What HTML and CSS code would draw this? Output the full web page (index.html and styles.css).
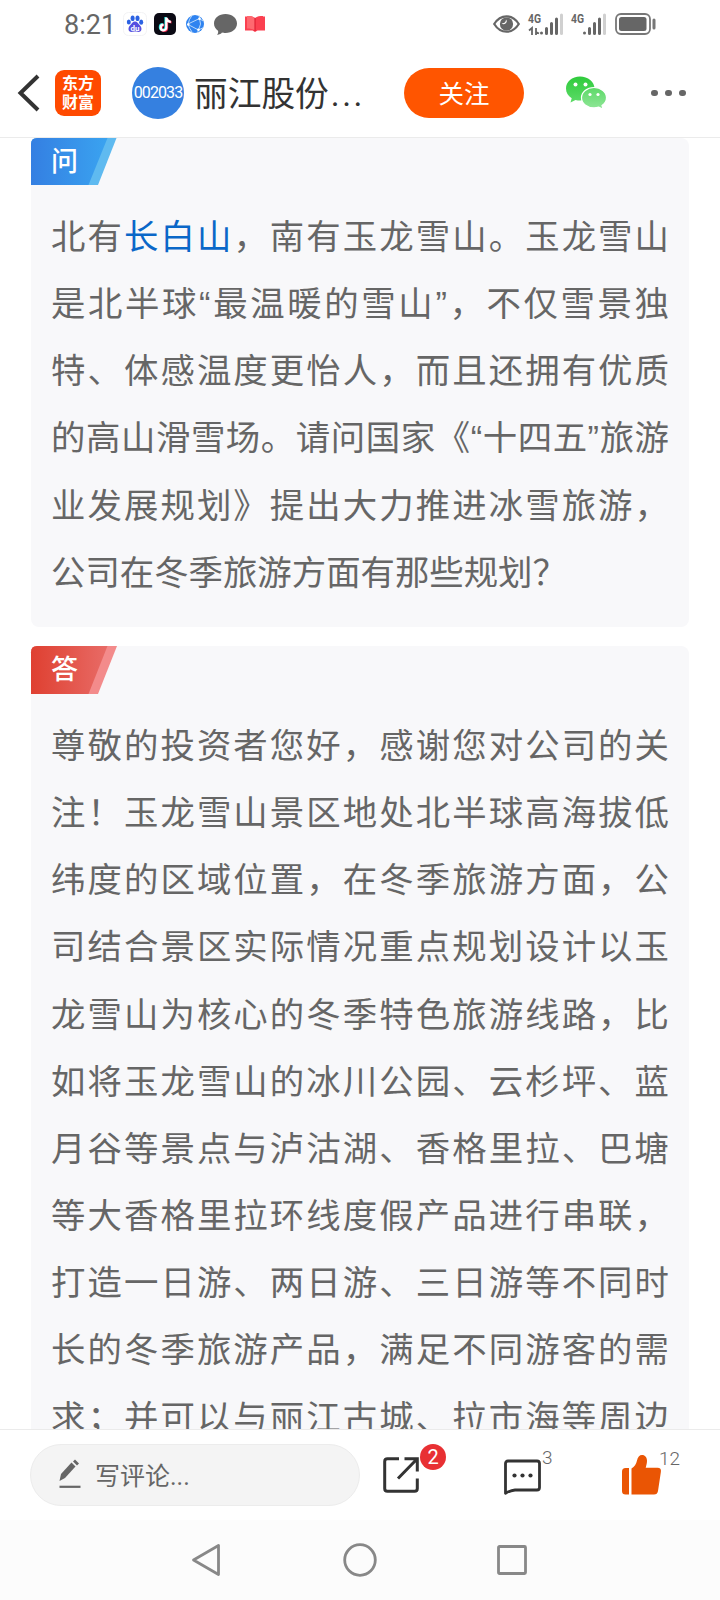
FILE: index.html
```html
<!DOCTYPE html>
<html lang="zh-CN">
<head>
    <meta charset="UTF-8">
    <meta name="viewport" content="width=device-width, initial-scale=1.0">
    <title>丽江股份</title>
    <link rel="stylesheet" href="styles.css">
</head>
<body>
    <header class="header">
        <!-- 状态栏 -->
        <div class="status-bar">
            <span class="time">8:21</span>
            <svg class="st-baidu" width="24" height="24" viewBox="0 0 24 24">
                <rect x=".5" y=".5" width="23" height="23" rx="5" fill="#fff" stroke="#f3f3f5"/>
                <g fill="#2b62e3">
                    <ellipse cx="5.8" cy="10" rx="2" ry="2.6"/>
                    <ellipse cx="9.6" cy="6.2" rx="2" ry="2.8"/>
                    <ellipse cx="14.5" cy="6.2" rx="2" ry="2.8"/>
                    <ellipse cx="18.2" cy="10.2" rx="2" ry="2.6"/>
                </g>
                <path d="M12 9.6c2.3 0 3.2 2.2 4.8 3.7 2.6 2.4 2.3 6.7-1.3 6.7-1.5 0-2-.4-3.5-.4s-2 .4-3.5.4C4.9 20 4.6 15.7 7.2 13.3 8.8 11.8 9.7 9.6 12 9.6z" fill="#5650e0"/>
                <text x="12" y="18.5" class="du">du</text>
            </svg>
            <svg class="st-tiktok" width="22" height="22" viewBox="0 0 22 22">
                <rect width="22" height="22" rx="5" fill="#0b0a14"/>
                <g fill="none" stroke-width="2.3">
                    <path d="M11.500 4v10a2.800 2.800 0 1 1-2.800-2.800M11.500 4.500c.4 2.200 2 3.600 4.500 3.800" stroke="#25e5e0"/>
                    <path d="M13 5v10a2.800 2.800 0 1 1-2.800-2.800M13 5.500c.4 2.200 2 3.600 4.500 3.800" stroke="#f42c55"/>
                    <path d="M12.300 4.500v10a2.800 2.800 0 1 1-2.800-2.800M12.300 5c.4 2.200 2 3.600 4.500 3.800" stroke="#fff"/>
                </g>
            </svg>
            <svg class="st-globe" width="18" height="18" viewBox="0 0 18 18">
                <circle cx="9" cy="9" r="9" fill="#2f83f0"/>
                <path d="M1 9.500L13.500 3.500M2 9.500l10.500 5.500M13.500 3.500Q16 9 12.500 15M13 0l.5 3.500L17 6M12.500 15l-1 3M12.500 15l5-2.500M6 .5Q3 4 2 9.500q1.500 4 4 7.500" fill="none" stroke="#c9e2fb" stroke-width=".9"/>
                <g fill="#fff"><circle cx="2.3" cy="9.5" r="1.2"/><circle cx="13.5" cy="3.7" r="1.3"/><circle cx="12.5" cy="14.8" r="1.3"/></g>
            </svg>
            <svg class="st-chat" width="23" height="21" viewBox="0 0 23 21">
                <path d="M11.500 0C18 0 23 4 23 9.500S18 19 11.500 19c-1.500 0-2.300 0-3.500-.4C7 20 5 21 3 20.800c1-1 1.500-2.500 1-4C1.500 15 0 12.500 0 9.500 0 4 5 0 11.500 0z" fill="#666"/>
            </svg>
            <svg class="st-book" width="20" height="16" viewBox="0 0 20 16">
                <path d="M0 .5h2v-.5c3 0 6 .2 8 2 2-1.800 5-2 8-2v.5h2V14.500h-7.500L10 16l-2.500-1.500H0z" fill="#fb4050"/>
                <path d="M2 0c3 0 6 .2 8 2v12.500C8 13 5 12.500 2 12.500z" fill="#fe6970"/>
                <path d="M10 2v13" stroke="#d9162b" stroke-width="1"/>
            </svg>
            <svg class="st-eye" width="27" height="18" viewBox="0 0 27 18">
                <path d="M1.200 9C4 4.500 8 1.300 13.500 1.300S23 4.500 25.800 9C23 13.500 19 16.700 13.500 16.700S4 13.500 1.200 9z" fill="none" stroke="#666" stroke-width="2.2"/>
                <circle cx="13.5" cy="9" r="6.6" fill="#666"/>
                <path d="M13 4.500a2.800 2.800 0 1 1-4.500 3.500c2.500.8 4.500-1 4.500-3.500z" fill="#fff"/>
            </svg>
            <svg class="st-signal1" width="36" height="23" viewBox="0 0 36 23">
                <text x="0" y="10" class="net" textLength="13" lengthAdjust="spacingAndGlyphs">4G</text>
                <path d="M1 17.500L4 15v7M8 15v7M8 19l3 1.500" fill="none" stroke="#666" stroke-width="1.8"/>
                <g stroke="#666" stroke-width="3" stroke-linecap="round"><path d="M13.500 20v.1M18.500 15.500v5M23.500 10.500v10M28.500 6v14.500"/><path d="M33.500 2v18.500" stroke="#d0d0d0"/></g>
            </svg>
            <svg class="st-signal2" width="36" height="23" viewBox="0 0 36 23">
                <text x="0" y="10" class="net" textLength="13" lengthAdjust="spacingAndGlyphs">4G</text>
                <g stroke="#666" stroke-width="3" stroke-linecap="round"><path d="M13.500 20v.1M18.500 15.500v5M23.500 10.500v10M28.500 6v14.500"/><path d="M33.500 2v18.500" stroke="#d0d0d0"/></g>
            </svg>
            <svg class="st-battery" width="41" height="22" viewBox="0 0 41 22">
                <rect x="1" y="1" width="34" height="20" rx="5" fill="none" stroke="#777" stroke-width="1.8"/>
                <rect x="4" y="4" width="27.5" height="14" rx="2.5" fill="#666"/>
                <rect x="37.5" y="5.5" width="3" height="11" rx="1.5" fill="#777"/>
            </svg>
        </div>
        <!-- 标题栏 -->
        <div class="title-bar">
            <svg class="back" width="24" height="40" viewBox="0 0 24 40">
                <path d="M20 3L2.500 20 20 37" fill="none" stroke="#333" stroke-width="4"/>
            </svg>
            <div class="logo">东方<br>财富</div>
            <div class="avatar">002033</div>
            <div class="name">丽江股份<span class="dots">...</span></div>
            <div class="follow">关注</div>
            <svg class="wechat" width="42" height="34" viewBox="0 0 42 34">
                <defs>
                    <linearGradient id="g1" x1="0" y1="0" x2="0" y2="1"><stop offset="0" stop-color="#2fcb3c"/><stop offset="1" stop-color="#5cdb67"/></linearGradient>
                    <linearGradient id="g2" x1="0" y1="0" x2="0" y2="1"><stop offset="0" stop-color="#5dd968"/><stop offset="1" stop-color="#90e698"/></linearGradient>
                </defs>
                <path d="M15 .5c8 0 14.500 5.300 14.500 12S23 24.500 15 24.500c-1.600 0-3-.2-4.500-.6L5.500 26.500l1.200-4.300C3 20 1 16.500 1 12.500c0-6.700 6-12 14-12z" fill="url(#g1)"/>
                <path d="M29 11.500c7 0 12.500 4.600 12.500 10.300 0 3.300-1.700 6-4.500 7.800l1 3.600-4.200-2.100c-1.500.5-3 .8-4.800.8-7 0-12.500-4.500-12.500-10.100S22 11.500 29 11.500z" fill="url(#g2)" stroke="#fff" stroke-width="1.2"/>
                <g fill="#fff"><circle cx="10.5" cy="8.5" r="2"/><circle cx="20.5" cy="8.5" r="2"/><circle cx="25" cy="18.500" r="1.6"/><circle cx="33" cy="18.5" r="1.6"/></g>
            </svg>
            <div class="more"><i></i><i></i><i></i></div>
        </div>
    </header>

    <main class="content">
        <section class="card ask">
            <svg class="tag" width="86" height="47" viewBox="0 0 86 47" preserveAspectRatio="none">
                <defs><linearGradient id="blue"><stop offset="0" stop-color="#347fe2"/><stop offset="1" stop-color="#3aa3f0"/></linearGradient></defs>
                <path d="M6 0h79.500L67 47H0V6q0-6 6-6z" fill="#5fbaf0"/>
                <path d="M6 0h70.500L57.500 47H0V6q0-6 6-6z" fill="url(#blue)"/>
                <text x="33.5" y="32.5" class="tag-text">问</text>
            </svg>
            <p>北有<a class="link">长白山</a>，南有玉龙雪山。玉龙雪山是北半球“最温暖的雪山”，不仅雪景独特、体感温度更怡人，而且还拥有优质的高山滑雪场。请问国家《“十四五”旅游业发展规划》提出大力推进冰雪旅游，公司在冬季旅游方面有那些规划？</p>
        </section>
        <section class="card answer">
            <svg class="tag" width="86" height="48" viewBox="0 0 86 47" preserveAspectRatio="none">
                <defs><linearGradient id="red"><stop offset="0" stop-color="#df4031"/><stop offset="1" stop-color="#e86b66"/></linearGradient></defs>
                <path d="M6 0h80L67 47H0V6q0-6 6-6z" fill="#f38b8b"/>
                <path d="M6 0h70.500L57.500 47H0V6q0-6 6-6z" fill="url(#red)"/>
                <text x="33.5" y="32.5" class="tag-text">答</text>
            </svg>
            <p>尊敬的投资者您好，感谢您对公司的关注！玉龙雪山景区地处北半球高海拔低纬度的区域位置，在冬季旅游方面，公司结合景区实际情况重点规划设计以玉龙雪山为核心的冬季特色旅游线路，比如将玉龙雪山的冰川公园、云杉坪、蓝月谷等景点与泸沽湖、香格里拉、巴塘等大香格里拉环线度假产品进行串联，打造一日游、两日游、三日游等不同时长的冬季旅游产品，满足不同游客的需求；并可以与丽江古城、拉市海等周边</p>
        </section>
    </main>

    <!-- 底部评论栏 -->
    <footer class="comment-bar">
        <div class="input">
            <svg width="22" height="30" viewBox="0 0 22 30">
                <path d="M.5 22l1.500-7L12.500 3.500l4 4L6 19z" fill="#666"/>
                <path d="M14 2.500l2-2 4 4-2 2z" fill="#666"/>
                <path d="M.5 27.800h21" stroke="#666" stroke-width="2.2"/>
            </svg>
            <span>写评论...</span>
        </div>
        <div class="action share">
            <svg width="36" height="36" viewBox="0 0 36 36" fill="none" stroke="#333" stroke-width="3">
                <path d="M16 1.700H4.500Q1.700 1.700 1.700 4.500v27q0 2.800 2.800 2.800h27q2.800 0 2.800-2.800V21.500M21.500 1.700h12.800V14.500M34 2L15 21.500"/>
            </svg>
            <span class="badge">2</span>
        </div>
        <div class="action reply">
            <svg width="37" height="36" viewBox="0 0 37 36">
                <path d="M4 2h29q2.500 0 2.500 2.500v24q0 2.500-2.500 2.500H11q-5 .5-9.500 3.300V4.500Q1.500 2 4 2z" fill="none" stroke="#333" stroke-width="2.8" stroke-linejoin="round"/>
                <g fill="#333"><circle cx="10.5" cy="16.5" r="2.1"/><circle cx="18.5" cy="16.5" r="2.1"/><circle cx="26.5" cy="16.5" r="2.1"/></g>
            </svg>
            <span class="count">3</span>
        </div>
        <div class="action like">
            <svg width="39" height="40" viewBox="0 0 39 40" fill="#ea5504">
                <path d="M3.500 13H7v26.500H3.500Q0 39.500 0 36V16.500Q0 13 3.500 13z"/>
                <path d="M9.500 13.500c3-1.500 4.700-4.500 5.500-8C15.700 2 17.500 0 20 0c3.200 0 5 2.500 5 5.700 0 2.600-.8 5-1.300 7H35.500q4 0 3.400 4L36 36q-.6 3.500-4 3.500H9.500z"/>
            </svg>
            <span class="count">12</span>
        </div>
    </footer>

    <nav class="sys-nav">
        <svg width="30" height="34" viewBox="0 0 30 34"><path d="M27.500 2.500v29L2.500 17z" class="nav-line"/></svg>
        <svg width="34" height="34" viewBox="0 0 34 34"><circle cx="17" cy="17" r="15.3" class="nav-line"/></svg>
        <svg width="30" height="30" viewBox="0 0 30 30"><rect x="1.5" y="1.5" width="27" height="27" rx="1" class="nav-line"/></svg>
    </nav>
</body>
</html>
```
FILE: styles.css
```css
* {
    box-sizing: border-box;
}
body {
    margin: 0;
    width: 720px;
    height: 1600px;
    display: flex;
    flex-direction: column;
    overflow: hidden;
    background: #fff;
    color: #666;
    font-family: Roboto, "Noto Sans CJK SC", sans-serif;
}
svg {
    display: block;
    flex: none;
    overflow: visible;
}

/* header */
.header {
    height: 138px;
    flex: none;
    border-bottom: 1px solid #ebebeb;
}
.status-bar {
    display: flex;
    align-items: center;
    height: 48px;
    padding-left: 64px;
}
.time {
    width: 59px;
    font-size: 27px;
    line-height: 48px;
    padding-top: 2px;
}
.du {
    font-size: 8px;
    font-weight: bold;
    fill: #fff;
    text-anchor: middle;
}
.net {
    font-size: 13.5px;
    font-weight: bold;
    fill: #666;
    font-family: Roboto, sans-serif;
}
.st-tiktok { margin-left: 7px; }
.st-globe { margin-left: 10px; }
.st-chat { margin-left: 10px; }
.st-book { margin-left: 8px; }
.st-eye { margin-left: 228px; }
.st-signal1 { margin-left: 8px; }
.st-signal2 { margin-left: 7px; }
.st-battery { margin-left: 8px; }

.title-bar {
    display: flex;
    align-items: center;
    height: 90px;
    padding-left: 18px;
}
.logo {
    width: 46px;
    height: 46px;
    margin-left: 13px;
    padding-top: 4px;
    border-radius: 9px;
    background: #ff4a00;
    color: #fff;
    font-size: 16px;
    font-weight: 700;
    line-height: 19px;
    text-align: center;
}
.avatar {
    width: 52px;
    height: 52px;
    margin-left: 31px;
    border-radius: 50%;
    background: #3580e0;
    color: #fff;
    font-size: 16px;
    letter-spacing: -.9px;
    line-height: 51px;
    text-align: center;
}
.name {
    width: 210px;
    margin-left: 10px;
    padding-top: 4px;
    color: #333;
    font-size: 33.7px;
    line-height: 50px;
    white-space: nowrap;
}
.dots {
    margin-left: 2px;
    letter-spacing: 2.5px;
}
.follow {
    width: 120px;
    height: 50px;
    border-radius: 25px;
    background: #f50;
    color: #fff;
    font-size: 25.5px;
    line-height: 52px;
    text-align: center;
}
.wechat {
    margin-left: 41px;
}
.more {
    display: flex;
    gap: 7.5px;
    margin-left: 44px;
}
.more i {
    width: 6.5px;
    height: 6.5px;
    border-radius: 50%;
    background: #666;
}

/* cards */
.content {
    height: 1291px;
    flex: none;
    overflow: hidden;
    padding: 0 31px;
}
.card {
    background: #f8f8fa;
    border-radius: 8px;
}
.ask {
    height: 489px;
    margin-bottom: 19px;
}
.tag-text {
    font-size: 27px;
    font-weight: 500;
    fill: #fff;
    text-anchor: middle;
}
.card p {
    margin: 0;
    padding: 19px 20px 0;
    font-family: "Liberation Sans", "Noto Sans CJK SC", sans-serif;
    font-size: 34.4px;
    line-height: 67.15px;
    text-align: justify;
    text-spacing-trim: space-all;
}
.answer p {
    text-align-last: justify;
}
.link {
    color: #0a67c8;
}

/* bottom */
.comment-bar {
    position: relative;
    display: flex;
    align-items: center;
    height: 91px;
    flex: none;
    padding-left: 30px;
    border-top: 1px solid #ebebeb;
    background: #fff;
}
.input {
    display: flex;
    align-items: center;
    gap: 14px;
    width: 330px;
    height: 62px;
    padding: 0 0 2px 28px;
    border: 1px solid #ececec;
    border-radius: 31px;
    background: #f4f4f4;
    font-size: 25px;
}
.action {
    position: relative;
}
.share { margin-left: 23px; }
.reply { margin-left: 85px; top: 2px; }
.like { margin-left: 81px; }
.badge {
    position: absolute;
    left: 37px;
    top: -13px;
    width: 26px;
    height: 26px;
    border-radius: 50%;
    background: #e83033;
    color: #fff;
    font-size: 20px;
    line-height: 27px;
    text-align: center;
}
.count {
    position: absolute;
    left: 38px;
    top: -12px;
    font-size: 19px;
    font-weight: 300;
    line-height: 22px;
}
.like .count {
    left: 37px;
    top: -7px;
}
.sys-nav {
    display: flex;
    align-items: center;
    height: 80px;
    padding-left: 191px;
    background: #fcfcfc;
}
.sys-nav svg:nth-child(2) { margin-left: 122px; }
.sys-nav svg:nth-child(3) { margin-left: 120px; }
.nav-line {
    fill: none;
    stroke: #888;
    stroke-width: 2.8;
    stroke-linejoin: round;
}
```
